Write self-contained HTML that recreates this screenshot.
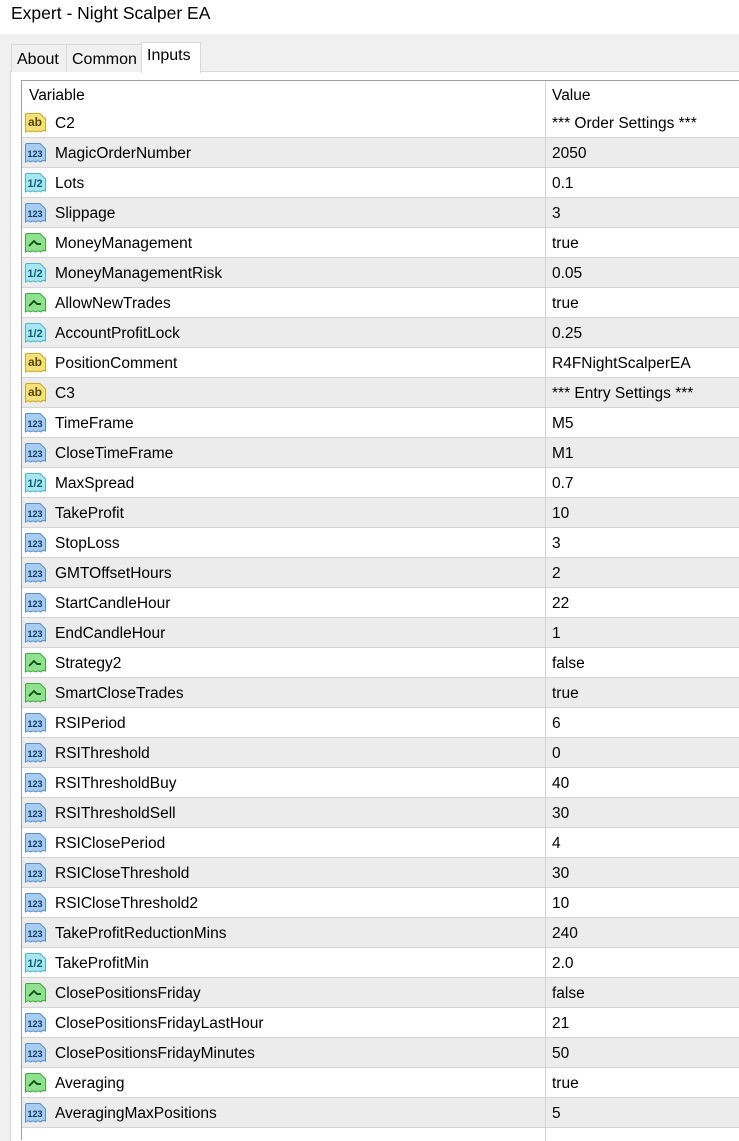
<!DOCTYPE html>
<html><head><meta charset="utf-8"><style>
*{margin:0;padding:0;box-sizing:border-box}
body{width:739px;height:1131px;overflow:hidden;background:#f0f0f0;font-family:"Liberation Sans",Arial,sans-serif;font-size:15.5px;color:#000;position:relative}
#title{position:absolute;left:0;top:0;width:739px;height:34px;background:#fff;font-size:17.5px;padding:3px 0 0 11px}
.tab{position:absolute;top:44px;height:28px;border:1px solid #d9d9d9;border-bottom:none;background:#f0f0f0;padding:6px 0 0 5px;font-size:16px}
#panel{position:absolute;left:10px;top:71px;width:740px;height:1070px;background:#fff;border-left:1px solid #d9d9d9;border-top:1px solid #d9d9d9}
#tbl{position:absolute;left:21px;top:80px;width:730px;height:1060px;border-left:1px solid #a0a0a0;border-top:1px solid #a0a0a0;background:#fff}
.row{position:absolute;left:0;width:730px;height:30px;border-bottom:1px solid #d4d4d4}
.row.g{background:#ececec}
.v{position:absolute;left:33px;top:7px}
.val{position:absolute;left:530px;top:7px}
.ic{position:absolute;left:2px;top:4px}
#div{position:absolute;left:523px;top:0;width:1px;height:1060px;background:#d4d4d4}
</style></head><body>
<div id="title">Expert - Night Scalper EA</div>
<div id="panel"></div>
<div class="tab" style="left:11px;width:56px">About</div>
<div class="tab" style="left:66px;width:76px">Common</div>
<div class="tab" style="left:141px;width:60px;top:42px;height:31px;background:#fff;padding-top:4px">Inputs</div>
<div id="tbl">
<div class="row" style="top:0;height:27px;border-bottom:none"><span class="v" style="left:7px;top:6px">Variable</span><span class="val" style="top:6px">Value</span></div>
<div id="rows"></div>
<div id="div"></div>
</div>
<script>
var d=[["ab","C2","*** Order Settings ***"],["n","MagicOrderNumber","2050"],["h","Lots","0.1"],["n","Slippage","3"],["b","MoneyManagement","true"],["h","MoneyManagementRisk","0.05"],["b","AllowNewTrades","true"],["h","AccountProfitLock","0.25"],["ab","PositionComment","R4FNightScalperEA"],["ab","C3","*** Entry Settings ***"],["n","TimeFrame","M5"],["n","CloseTimeFrame","M1"],["h","MaxSpread","0.7"],["n","TakeProfit","10"],["n","StopLoss","3"],["n","GMTOffsetHours","2"],["n","StartCandleHour","22"],["n","EndCandleHour","1"],["b","Strategy2","false"],["b","SmartCloseTrades","true"],["n","RSIPeriod","6"],["n","RSIThreshold","0"],["n","RSIThresholdBuy","40"],["n","RSIThresholdSell","30"],["n","RSIClosePeriod","4"],["n","RSICloseThreshold","30"],["n","RSICloseThreshold2","10"],["n","TakeProfitReductionMins","240"],["h","TakeProfitMin","2.0"],["b","ClosePositionsFriday","false"],["n","ClosePositionsFridayLastHour","21"],["n","ClosePositionsFridayMinutes","50"],["b","Averaging","true"],["n","AveragingMaxPositions","5"]];
var col={ab:["#f3e27a","#c9a92a","#5a4500"],n:["#a9cdf0","#5a8fc4","#0f3a6b"],h:["#a8e6f0","#4eb4c8","#0b5f78"],b:["#8fe08f","#3ea83e","#0a4a0a"]};
var h="";
d.forEach(function(r,i){
 var c=col[r[0]];
 var inner;
 if(r[0]=="ab")inner='<text x="11" y="14" font-family="Liberation Sans" font-weight="bold" font-size="12" fill="'+c[2]+'" text-anchor="middle">ab</text>';
 else if(r[0]=="n")inner='<text x="11" y="15" font-family="Liberation Sans" font-weight="bold" font-size="9" fill="'+c[2]+'" text-anchor="middle">123</text>';
 else if(r[0]=="h")inner='<text x="11" y="15" font-family="Liberation Sans" font-weight="bold" font-size="11" fill="'+c[2]+'" text-anchor="middle">1/2</text>';
 else inner='<path d="M5 14 L10 9 L13 12 L17 12" stroke="'+c[2]+'" stroke-width="1.8" fill="none"/>';
 var icon='<svg class="ic" width="23" height="22" viewBox="0 0 23 22"><path d="M1.5 3 Q1.5 1.5 3 1.5 L16 1.5 L21.5 7 L21.5 19 Q19 17.5 16.5 20 Q14 18 11.5 20 Q9 18 6.5 20 Q4 18 1.5 20 Z" fill="'+c[0]+'" stroke="'+c[1]+'" stroke-width="1"/>'+inner+'</svg>';
 h+='<div class="row'+(i%2?' g':'')+'" style="top:'+(27+30*i)+'px">'+icon+'<span class="v">'+r[1]+'</span><span class="val">'+r[2]+'</span></div>';
});
document.getElementById("rows").innerHTML=h;
</script>
</body></html>
